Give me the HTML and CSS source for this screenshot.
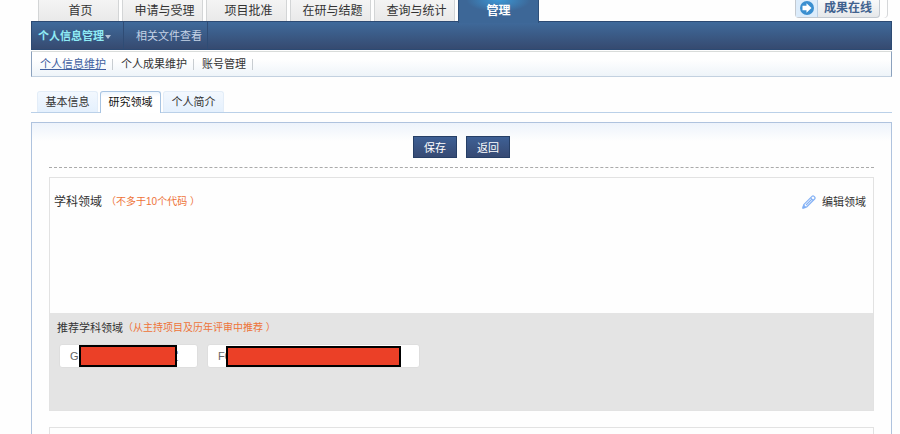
FILE: index.html
```html
<!DOCTYPE html>
<html lang="zh-CN">
<head>
    <meta charset="UTF-8">
    <meta name="viewport" content="width=device-width, initial-scale=1.0">
    <title>个人信息维护</title>
    <link rel="stylesheet" href="styles.css">
</head>
<body>
    <div class="page">
        <header class="top">
            <nav class="main-nav">
                <a href="#">首页</a>
                <a href="#">申请与受理</a>
                <a href="#">项目批准</a>
                <a href="#">在研与结题</a>
                <a href="#">查询与统计</a>
                <a href="#" class="active">管理</a>
            </nav>
            <a href="#" class="online">
                <span class="online-icon">
                    <svg width="14" height="14" viewBox="0 0 14 14">
                        <circle cx="7" cy="7" r="7" fill="#3a8fd0"/>
                        <path d="M2.500 4.700h4V2.200L11.500 7 6.500 11.800V9.300h-4z" fill="#fff"/>
                    </svg>
                </span>
                <span class="online-text">成果在线</span>
            </a>
        </header>

        <nav class="sub-nav">
            <a href="#" class="current">个人信息管理<span class="caret"></span></a>
            <a href="#">相关文件查看</a>
        </nav>

        <nav class="third-nav">
            <a href="#" class="current">个人信息维护</a>
            <a href="#">个人成果维护</a>
            <a href="#">账号管理</a>
        </nav>

        <div class="tabs">
            <a href="#">基本信息</a>
            <a href="#" class="active">研究领域</a>
            <a href="#">个人简介</a>
        </div>

        <main class="content">
            <div class="actions">
                <button type="button" class="btn">保存</button>
                <button type="button" class="btn">返回</button>
            </div>

            <section class="panel">
                <div class="panel-head">
                    <h2>学科领域</h2>
                    <span class="note">（不多于10个代码 ）</span>
                    <a href="#" class="edit">
                        <svg width="14" height="14" viewBox="0 0 14 14" fill="none" stroke="#85b2f5" stroke-width="1.200" stroke-linejoin="round">
                            <path d="M1 13l1-3.600L10 1.400q1-1 2 0l.6.6q1 1 0 2L4.600 12z"/>
                            <path d="M8.600 2.800l2.600 2.600M4 10l5.500-5.500"/>
                            <path d="M.8 13.200l.8-3 2.200 2.200z" fill="#6ea3f2"/>
                        </svg>
                        编辑领域
                    </a>
                </div>
                <div class="recommend">
                    <div class="recommend-head">
                        <h3>推荐学科领域</h3>
                        <span class="note">（从主持项目及历年评审中推荐 ）</span>
                    </div>
                    <div class="codes">
                        <button type="button" class="code">G<span class="mask"></span><span class="rest">定</span></button>
                        <button type="button" class="code wide">F0<span class="mask"></span></button>
                    </div>
                </div>
            </section>

            <section class="panel next"></section>
        </main>
    </div>
</body>
</html>
```

FILE: styles.css
```css
* {
    box-sizing: border-box;
}

body {
    margin: 0;
    background-color: #fefefe;
    color: #333;
    font-family: "Liberation Sans", "Noto Sans CJK SC", sans-serif;
    font-size: 11px;
    line-height: 16px;
}

a {
    color: inherit;
    text-decoration: none;
}

h2, h3 {
    margin: 0;
    font-weight: normal;
}

.page {
    display: flex;
    flex-direction: column;
    height: 100vh;
    overflow: hidden;
    padding: 0 8px 0 31px;
}

/* Main navigation */
.top {
    display: flex;
    justify-content: space-between;
    align-items: flex-start;
    padding: 0 4px 0 7px;
}

.main-nav {
    display: flex;
    gap: 3px;
    font-size: 12px;
}

.main-nav a {
    width: 81px;
    height: 21px;
    padding-left: 4px;
    line-height: 23px;
    text-align: center;
    border: 1px solid #d3d5d6;
    border-width: 0 1px;
    background: linear-gradient(#f4f4f4, #e9e9e9);
}

.main-nav .active {
    height: 23px;
    margin-bottom: -2px;
    padding-left: 0;
    color: #fff;
    font-weight: bold;
    border-color: #2f5079;
    background: radial-gradient(ellipse 32px 12px at 50% 0, #3b98d6, #3d6797);
    z-index: 1;
}

.online {
    display: flex;
    height: 18px;
    margin-right: 8px;
    border: 1px solid #c3c9d0;
    border-top: 0;
    border-radius: 0 0 4px 4px;
    background: linear-gradient(#f8f9fa, #e6e8ea);
    box-shadow: 7px 0 0 #fefefe, 8px 0 0 #d5d7d9;
}

.online-icon {
    display: flex;
    width: 22px;
    padding: 1px 0 0 4px;
    border-right: 1px solid #b9cfe5;
    background-color: #dcecfb;
}

.online-text {
    padding: 0 7px 0 6px;
    color: #41628f;
    font-size: 12px;
    font-weight: bold;
}

.sub-nav {
    display: flex;
    flex: none;
    height: 29px;
    border: 1px solid #2c4a73;
    background: linear-gradient(#3f6a9b, #364a70);
    color: #c5d3e6;
    line-height: 28px;
}

.sub-nav a {
    padding: 0 5px 0 12px;
    border-right: 1px solid #2f4c75;
}

.sub-nav .current {
    padding: 0 12px 0 6px;
    color: #90ecf5;
    font-weight: bold;
}

.caret {
    display: inline-block;
    margin-left: 1px;
    border: 3px solid transparent;
    border-top: 4px solid #b5c3d4;
    border-bottom: 0;
    vertical-align: 1px;
}

.third-nav {
    display: flex;
    flex: none;
    align-items: center;
    height: 26px;
    margin-top: 1px;
    padding-left: 8px;
    border: 1px solid #c3d1e0;
    border-left-color: #8ba1bd;
    border-right-color: #8ba1bd;
    border-top-color: #d9dcda;
    background: linear-gradient(#fff 30%, #eef4f9);
}

.third-nav a {
    display: flex;
    align-items: center;
}

.third-nav a::after {
    content: "";
    height: 11px;
    margin: 0 8px 0 6px;
    border-right: 1px solid #c8cdd1;
}

.third-nav .current {
    color: #3f5fa0;
    text-decoration: underline;
}

/* Page tabs */
.tabs {
    display: flex;
    flex: none;
    gap: 2px;
    margin-top: 14px;
    padding-left: 6px;
    border-bottom: 1px solid #bad0e8;
}

.tabs a {
    width: 61px;
    height: 21px;
    line-height: 21px;
    text-align: center;
    border: 1px solid #e3edf8;
    border-bottom: 0;
    border-radius: 3px 3px 0 0;
    background: linear-gradient(#f3f8fe, #e4f0fd);
}

.tabs .active {
    height: 22px;
    margin-bottom: -1px;
    border-color: #a8c4e2;
    background: linear-gradient(#edf5fd, #fff 5px);
    color: #111;
}

/* Content */
.content {
    display: flex;
    flex: 1;
    flex-direction: column;
    min-height: 0;
    margin-top: 9px;
    padding: 13px 17px 0;
    border: 1px solid #afc3de;
    border-bottom: 0;
    background: linear-gradient(#edf3fb, #fefefe 18px);
}

.actions {
    display: flex;
    justify-content: center;
    gap: 9px;
    padding-bottom: 9px;
    border-bottom: 1px dashed #aaa;
}

.btn {
    width: 44px;
    height: 22px;
    padding: 2px 0 0;
    border: 1px solid #263f66;
    background: linear-gradient(#3e6095, #374a73);
    color: #fff;
    font: inherit;
    cursor: pointer;
}

.panel {
    flex: none;
    margin-top: 9px;
    border: 1px solid #e2e2e2;
}

.panel-head {
    display: flex;
    align-items: center;
    height: 135px;
    padding: 0 7px 88px 4px;
}

.panel-head h2 {
    font-size: 12px;
}

.note {
    margin-left: 4px;
    color: #ee7338;
    font-size: 10px;
}

.edit {
    display: flex;
    align-items: center;
    gap: 6px;
    margin-left: auto;
}

.recommend {
    height: 97px;
    padding: 7px 9px;
    background-color: #e4e4e4;
}

.recommend-head {
    display: flex;
    align-items: center;
    margin-left: -2px;
}

.recommend-head h3 {
    font-size: 11px;
}

.recommend-head .note {
    margin-left: 0;
}

.codes {
    display: flex;
    gap: 9px;
    margin-top: 8px;
}

.code {
    display: flex;
    align-items: center;
    width: 139px;
    height: 24px;
    padding: 0 10px;
    border: 1px solid #dedede;
    border-radius: 3px;
    background-color: #fff;
    color: #666;
    font: inherit;
}

.code.wide {
    width: 213px;
}

.mask {
    flex: none;
    width: 98px;
    height: 22px;
    border: 2px solid #000;
    background-color: #eb4027;
    z-index: 1;
}

.wide .mask {
    width: 175px;
    height: 21px;
    margin-left: -5px;
}

.rest {
    margin-left: -9px;
}

.next {
    flex: 1;
    margin-top: 16px;
    border-bottom: 0;
}
```
